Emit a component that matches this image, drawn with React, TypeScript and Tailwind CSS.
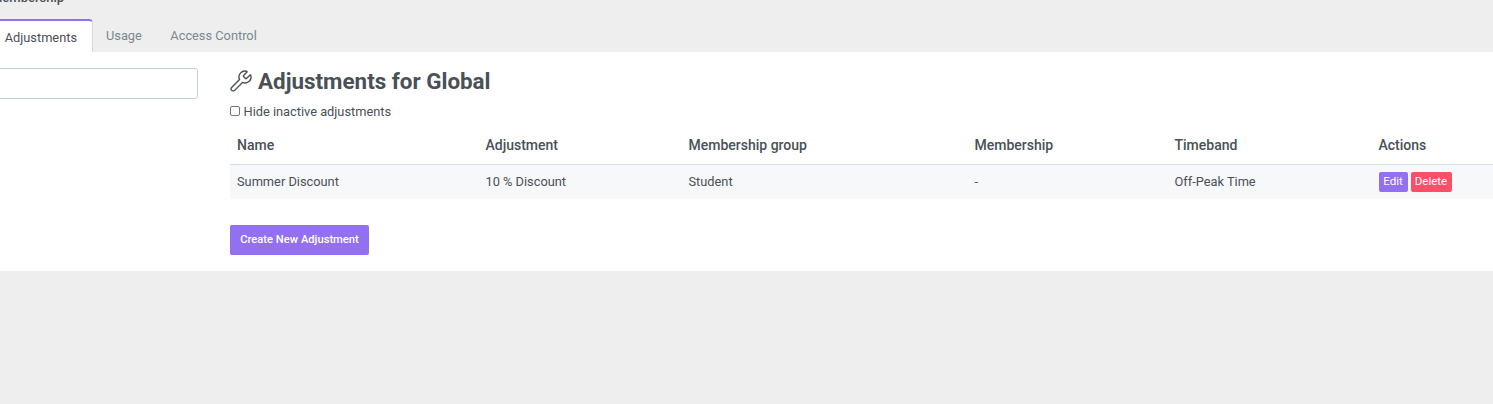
import { Wrench } from "lucide-react";

const columns = [
  { label: "Name", value: "Summer Discount", width: "w-[248.5px]" },
  { label: "Adjustment", value: "10 % Discount", width: "w-[203px]" },
  { label: "Membership group", value: "Student", width: "w-[286px]" },
  { label: "Membership", value: "-", width: "w-[200px]" },
  { label: "Timeband", value: "Off-Peak Time", width: "w-[204px]" },
];

function App() {
  return (
    <div className="h-[404px] w-[1493px] overflow-hidden bg-[#eeeeee] font-['Roboto',sans-serif] text-[#495057]">
      <div className="h-[19px] overflow-hidden">
        <div className="-mt-[12px] -ml-[9px] text-[13px] leading-[20px] font-medium text-[#495057]">
          Membership
        </div>
      </div>

      <div className="flex h-[33px] text-[12.8px]">
        <div className="flex w-[93px] items-center justify-end rounded-tr-[4px] border-t-2 border-r border-t-[#9370f0] border-r-[#d5d9dd] bg-white pr-[15px] pt-[3px] text-[#495057]">
          Adjustments
        </div>
        <div className="flex items-center pl-[13px] pt-[1px] text-[#78888f]">Usage</div>
        <div className="flex items-center pl-[28.5px] pt-[1px] text-[#78888f]">Access Control</div>
      </div>

      <div className="flex h-[219px] bg-white">
        <div className="w-[230px] shrink-0 pt-[16px]">
          <div className="-ml-[4px] h-[31px] w-[202px] rounded-[3px] border border-[#c3cfd8] bg-white" />
        </div>

        <div className="min-w-0 flex-1">
          <div className="mt-[17px] flex h-[24px] items-center">
            <Wrench className="-ml-[1px] h-[24px] w-[24px] text-[#495057]" strokeWidth={1.4} />
            <h1 className="ml-[5px] text-[22.4px] leading-[24px] font-bold text-[#495057]">
              Adjustments for Global
            </h1>
          </div>

          <label className="mt-[10px] flex h-[18px] items-center text-[12.8px]">
            <input type="checkbox" className="-mt-[3px] h-[10px] w-[10px] appearance-none rounded-[2px] border border-[#767676] bg-white" />
            <span className="ml-[3.5px]">Hide inactive adjustments</span>
          </label>

          <div className="mt-[4px] flex h-[40px] w-[1270px] items-center border-b border-[#d3dde8] pt-[2px] text-[14px] font-medium">
            {columns.map((col) => (
              <div key={col.label} className={`${col.width} pl-[7px]`}>
                {col.label}
              </div>
            ))}
            <div className="pl-[7px]">Actions</div>
          </div>

          <div className="flex h-[34px] w-[1270px] items-center bg-[#f7f8fa] text-[12.8px]">
            {columns.map((col) => (
              <div key={col.label} className={`${col.width} pl-[7px]`}>
                {col.value}
              </div>
            ))}
            <div className="flex gap-[3px] pl-[7px] text-[11.5px] text-white">
              <span className="flex h-[20px] w-[29px] items-center justify-center rounded-[2px] bg-[#9370f0]">Edit</span>
              <span className="flex h-[20px] w-[41px] items-center justify-center rounded-[2px] bg-[#fb4f69]">Delete</span>
            </div>
          </div>

          <button className="mt-[26px] flex h-[30px] w-[139px] items-center justify-center rounded-[2px] bg-[#9370f0] text-[11.2px] font-medium text-white">
            Create New Adjustment
          </button>
        </div>
      </div>
    </div>
  );
}

export default App;
